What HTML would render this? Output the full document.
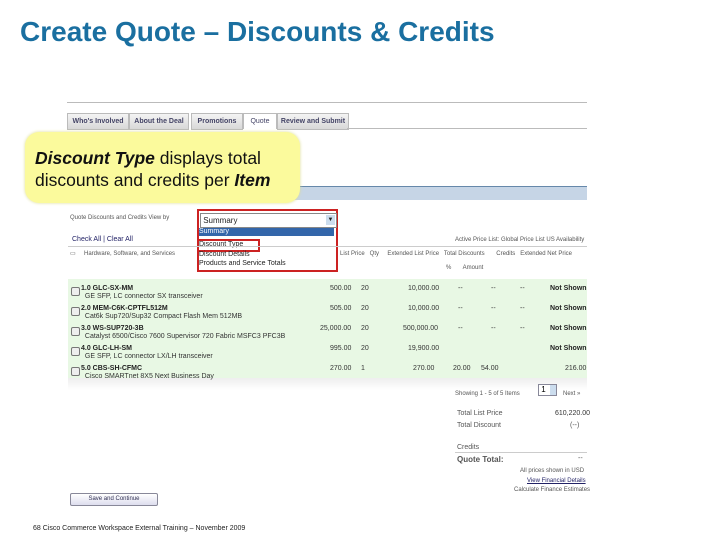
<!DOCTYPE html>
<html><head><style>
body{margin:0;width:720px;height:540px;background:#fff;position:relative;overflow:hidden;font-family:"Liberation Sans",sans-serif;}
.a{position:absolute;white-space:nowrap;}
.s{font-size:7px;color:#555;line-height:8px}
.tab{position:absolute;top:113px;height:15px;background:linear-gradient(#f4f4f4,#d8d8d8);border:1px solid #bbb;font-size:7px;font-weight:bold;color:#446;line-height:15px;text-align:center;}
.row{position:absolute;left:68px;width:519px;font-size:7px;color:#333;line-height:8px}
.row b{font-weight:bold;color:#222}
.cb{position:absolute;left:3px;top:2px;width:7px;height:7px;border:1px solid #777;background:#eee;border-radius:2px}
.dd{position:absolute;left:199px;font-size:7px;color:#222;line-height:8px}
</style></head><body>
<div class="a" style="left:20px;top:16px;font-size:28px;font-weight:bold;color:#1a6fa0;">Create Quote – Discounts &amp; Credits</div>
<div class="a" style="left:67px;top:102px;width:520px;height:1px;background:#bbb"></div>
<div class="tab" style="left:67px;width:60px">Who's Involved</div>
<div class="tab" style="left:129px;width:58px">About the Deal</div>
<div class="tab" style="left:191px;width:50px">Promotions</div>
<div class="tab" style="left:243px;width:32px;background:#fff;border-bottom:none;font-weight:normal">Quote</div>
<div class="tab" style="left:277px;width:70px">Review and Submit</div>
<div class="a" style="left:347px;top:128px;width:240px;height:1px;background:#bbb"></div>
<div class="a" style="left:280px;top:186px;width:307px;height:13px;background:#c6d5e6;border-top:1px solid #6688aa"></div>
<div class="a" style="left:25px;top:132px;width:275px;height:71px;background:#fbfa9c;border-radius:14px;box-shadow:0 0 3px #dd9"></div>
<div class="a" style="left:35px;top:147px;font-size:17.5px;color:#111;line-height:22px"><b><i>Discount Type</i></b> displays total<br>discounts and credits per <b><i>Item</i></b></div>
<div class="a s" style="left:70px;top:214px;font-size:6px">Quote Discounts and Credits View by</div>
<div class="a" style="left:197px;top:209px;width:137px;height:59px;border:2px solid #c22"></div>
<div class="a" style="left:200px;top:213px;width:135px;height:13px;border:1px solid #888;background:#fff;font-size:8px;line-height:13px;color:#222">&nbsp;Summary<span style="position:absolute;right:1px;top:1px;width:9px;height:10px;background:#cde;font-size:6px;line-height:10px;text-align:center">▼</span></div>
<div class="a" style="left:199px;top:228px;width:135px;height:8px;background:#3366aa;color:#fff;font-size:7px;line-height:8px">Summary</div>
<div class="dd" style="top:241px">Discount Type</div>
<div class="a" style="left:197px;top:239px;width:59px;height:9px;border:2px solid #c22"></div>
<div class="dd" style="top:251px">Discount Details</div>
<div class="dd" style="top:260px">Products and Service Totals</div>
<div class="a s" style="left:72px;top:236px;color:#226">Check All | Clear All</div>
<div class="a s" style="left:455px;top:236px;font-size:6px">Active Price List: Global Price List US Availability</div>
<div class="a" style="left:68px;top:246px;width:519px;height:1px;background:#ccc"></div>
<div class="a s" style="left:70px;top:250px;font-size:6px">▭ &nbsp; &nbsp; Hardware, Software, and Services</div>
<div class="a s" style="left:340px;top:250px;font-size:6px">List Price &nbsp; Qty &nbsp; &nbsp; Extended List Price &nbsp; Total Discounts &nbsp; &nbsp; &nbsp; Credits &nbsp; Extended Net Price</div>
<div class="a s" style="left:446px;top:264px;font-size:6px">% &nbsp; &nbsp; &nbsp; Amount</div>
<div class="a" style="left:68px;top:279px;width:519px;height:100px;background:#e8f8e4"></div>
<div class="a" style="left:68px;top:378px;width:519px;height:12px;background:linear-gradient(#eee,#fff)"></div>
<div class="row" style="top:285px"><span class="cb"></span><span class="a" style="left:13px"><b>1.0 GLC-SX-MM</b><br>&nbsp;&nbsp;GE SFP, LC connector SX transceiver</span><span class="a" style="left:262px">500.00</span><span class="a" style="left:293px">20</span><span class="a" style="left:340px">10,000.00</span><span class="a" style="left:390px">--</span><span class="a" style="left:423px">--</span><span class="a" style="left:452px">--</span><span class="a" style="left:482px"><b>Not Shown</b></span></div>
<div class="row" style="top:305px"><span class="cb"></span><span class="a" style="left:13px"><b>2.0 MEM-C6K-CPTFL512M</b><br>&nbsp;&nbsp;Cat6k Sup720/Sup32 Compact Flash Mem 512MB</span><span class="a" style="left:262px">505.00</span><span class="a" style="left:293px">20</span><span class="a" style="left:340px">10,000.00</span><span class="a" style="left:390px">--</span><span class="a" style="left:423px">--</span><span class="a" style="left:452px">--</span><span class="a" style="left:482px"><b>Not Shown</b></span></div>
<div class="row" style="top:325px"><span class="cb"></span><span class="a" style="left:13px"><b>3.0 WS-SUP720-3B</b><br>&nbsp;&nbsp;Catalyst 6500/Cisco 7600 Supervisor 720 Fabric MSFC3 PFC3B</span><span class="a" style="left:252px">25,000.00</span><span class="a" style="left:293px">20</span><span class="a" style="left:335px">500,000.00</span><span class="a" style="left:390px">--</span><span class="a" style="left:423px">--</span><span class="a" style="left:452px">--</span><span class="a" style="left:482px"><b>Not Shown</b></span></div>
<div class="row" style="top:345px"><span class="cb"></span><span class="a" style="left:13px"><b>4.0 GLC-LH-SM</b><br>&nbsp;&nbsp;GE SFP, LC connector LX/LH transceiver</span><span class="a" style="left:262px">995.00</span><span class="a" style="left:293px">20</span><span class="a" style="left:340px">19,900.00</span><span class="a" style="left:482px"><b>Not Shown</b></span></div>
<div class="row" style="top:365px"><span class="cb"></span><span class="a" style="left:13px"><b>5.0 CBS-SH-CFMC</b><br>&nbsp;&nbsp;Cisco SMARTnet 8X5 Next Business Day</span><span class="a" style="left:262px">270.00</span><span class="a" style="left:293px">1</span><span class="a" style="left:345px">270.00</span><span class="a" style="left:385px">20.00</span><span class="a" style="left:413px">54.00</span><span class="a" style="left:497px">216.00</span></div>
<div class="a s" style="left:455px;top:390px;font-size:6px">Showing 1 - 5 of 5 Items</div>
<div class="a" style="left:538px;top:384px;width:17px;height:10px;border:1px solid #889;background:#fff;font-size:8px;line-height:10px">&nbsp;1<span style="position:absolute;right:0;top:0;width:6px;height:10px;background:#cde"></span></div>
<div class="a s" style="left:563px;top:390px;font-size:6px">Next »</div>
<div class="a s" style="left:457px;top:410px">Total List Price</div><div class="a s" style="left:555px;top:410px;color:#333">610,220.00</div>
<div class="a s" style="left:457px;top:422px">Total Discount</div><div class="a s" style="left:570px;top:422px">(--)</div>
<div class="a s" style="left:457px;top:444px">Credits</div>
<div class="a" style="left:455px;top:452px;width:132px;height:1px;background:#ccc"></div>
<div class="a" style="left:457px;top:455px;font-size:8px;font-weight:bold;color:#555">Quote Total:</div><div class="a s" style="left:578px;top:455px">--</div>
<div class="a s" style="left:520px;top:467px;font-size:6px">All prices shown in USD</div>
<div class="a s" style="left:527px;top:477px;font-size:6px;color:#226;text-decoration:underline">View Financial Details</div>
<div class="a s" style="left:514px;top:486px;font-size:6px">Calculate Finance Estimates</div>
<div class="a" style="left:70px;top:493px;width:86px;height:11px;border:1px solid #889;border-radius:2px;background:linear-gradient(#fff,#dde);font-size:6px;color:#335;text-align:center;line-height:11px">Save and Continue</div>
<div class="a" style="left:33px;top:525px;font-size:7px;color:#222">68 Cisco Commerce Workspace External Training – November 2009</div>
</body></html>
